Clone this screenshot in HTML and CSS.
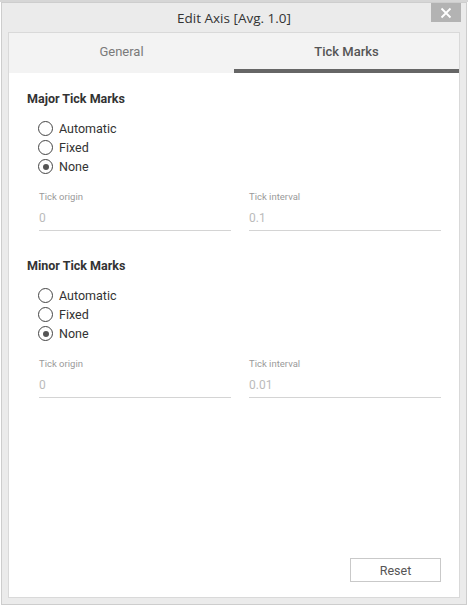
FILE: index.html
```html
<!DOCTYPE html>
<html>
<head>
<meta charset="utf-8">
<link rel="stylesheet" href="styles.css">
</head>
<body>
<div class="backdrop"></div>
<div class="dialog">
  <div class="titlebar">
    <span class="title">Edit Axis [Avg. 1.0]</span>
    <button class="close" aria-label="Close">
      <svg width="12" height="12" viewBox="0 0 12 12"><path d="M1.5 1.5 L10.5 10.5 M10.5 1.5 L1.5 10.5" stroke="#fff" stroke-width="1.8" fill="none"/></svg>
    </button>
  </div>
  <div class="panel">
    <div class="tabs">
      <div class="tab">General</div>
      <div class="tab active">Tick Marks</div>
    </div>
    <div class="content">
      <section class="group">
        <h3 class="heading">Major Tick Marks</h3>
        <div class="radios">
          <label class="radio"><span class="circle"></span>Automatic</label>
          <label class="radio"><span class="circle"></span>Fixed</label>
          <label class="radio"><span class="circle checked"></span>None</label>
        </div>
        <div class="fields">
          <div class="field"><div class="flabel">Tick origin</div><div class="fvalue">0</div></div>
          <div class="field"><div class="flabel">Tick interval</div><div class="fvalue">0.1</div></div>
        </div>
      </section>
      <section class="group">
        <h3 class="heading">Minor Tick Marks</h3>
        <div class="radios">
          <label class="radio"><span class="circle"></span>Automatic</label>
          <label class="radio"><span class="circle"></span>Fixed</label>
          <label class="radio"><span class="circle checked"></span>None</label>
        </div>
        <div class="fields">
          <div class="field"><div class="flabel">Tick origin</div><div class="fvalue">0</div></div>
          <div class="field"><div class="flabel">Tick interval</div><div class="fvalue">0.01</div></div>
        </div>
      </section>
      <div class="spacer"></div>
      <div class="footer"><button class="reset">Reset</button></div>
    </div>
  </div>
</div>
</body>
</html>
```
FILE: styles.css
```css
html, body {
  margin: 0;
  padding: 0;
  background: #ffffff;
  font-family: Roboto, "Liberation Sans", sans-serif;
}
.backdrop {
  position: absolute;
  left: 0; top: 0; right: 0;
  height: 2px;
  background: #d6d6d6;
}
.dialog {
  position: relative;
  margin: 2px 0 0 1px;
  width: 466px;
  height: 603px;
  box-sizing: border-box;
  border: 1px solid #cdcdcd;
  background: #ebebeb;
  display: flex;
  flex-direction: column;
  padding: 0 6px 6px 6px;
}
.titlebar {
  height: 29px;
  display: flex;
  align-items: center;
  justify-content: center;
  flex: none;
}
.title {
  font-family: "Open Sans", "Liberation Sans", sans-serif;
  font-size: 13.5px;
  color: #333;
  margin-top: 1px;
}
.close {
  position: absolute;
  right: 5px;
  top: 0;
  width: 30px;
  height: 19px;
  border: none;
  padding: 0;
  background: #b3b3b3;
  display: flex;
  align-items: center;
  justify-content: center;
}
.panel {
  flex: 1;
  border: 1px solid #d9d9d9;
  background: #fff;
  display: flex;
  flex-direction: column;
}
.tabs {
  display: flex;
  height: 40px;
  background: #f3f3f3;
  flex: none;
}
.tab {
  flex: 1;
  display: flex;
  align-items: center;
  justify-content: center;
  font-size: 13px;
  color: #7a7a7a;
  box-sizing: border-box;
  padding-bottom: 4px;
}
.tab.active {
  color: #555;
  font-weight: 500;
  border-bottom: 4px solid #666;
  padding-bottom: 0;
}
.content {
  flex: 1;
  display: flex;
  flex-direction: column;
  padding: 18px 18px 15px 18px;
}
.group {
  margin-bottom: 27px;
}
.heading {
  margin: 0;
  font-size: 12.5px;
  font-weight: 700;
  color: #333;
  line-height: 16px;
}
.radios {
  display: flex;
  flex-direction: column;
  margin-top: 12px;
  padding-left: 11px;
}
.radio {
  display: flex;
  align-items: center;
  height: 19px;
  font-size: 12.5px;
  color: #333;
}
.circle {
  width: 13px;
  height: 13px;
  border: 1px solid #444;
  border-radius: 50%;
  margin-right: 6px;
  position: relative;
  flex: none;
}
.circle.checked::after {
  content: "";
  position: absolute;
  left: 3.5px;
  top: 3.5px;
  width: 6px;
  height: 6px;
  border-radius: 50%;
  background: #555;
}
.fields {
  display: flex;
  gap: 18px;
  padding-left: 12px;
  margin-top: 14px;
}
.field {
  width: 192px;
  border-bottom: 1px solid #d4d4d4;
}
.flabel {
  font-size: 9.5px;
  color: #9a9a9a;
  line-height: 13px;
}
.fvalue {
  font-size: 12px;
  color: #bbb;
  line-height: 16px;
  margin-top: 7px;
  padding-bottom: 4px;
}
.spacer {
  flex: 1;
}
.footer {
  display: flex;
  justify-content: flex-end;
}
.reset {
  width: 91px;
  height: 24px;
  background: #fff;
  border: 1px solid #c9c9c9;
  font-family: Roboto, "Liberation Sans", sans-serif;
  font-size: 12.5px;
  color: #555;
  margin-right: 0;
}
```
